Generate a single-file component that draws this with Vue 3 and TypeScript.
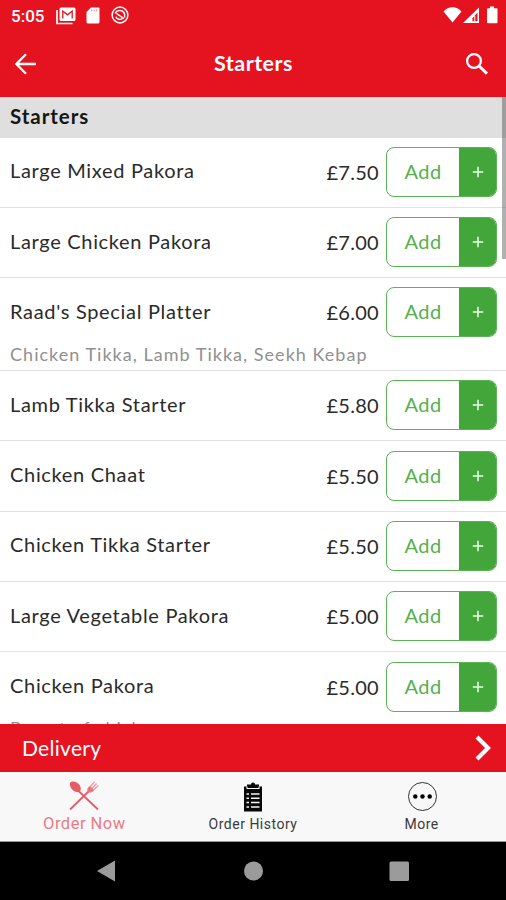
<script setup lang="ts">
interface MenuItem {
  name: string
  price: string
  note?: string
}

const items: MenuItem[] = [
  { name: 'Large Mixed Pakora', price: '£7.50' },
  { name: 'Large Chicken Pakora', price: '£7.00' },
  { name: "Raad's Special Platter", price: '£6.00', note: 'Chicken Tikka, Lamb Tikka, Seekh Kebap' },
  { name: 'Lamb Tikka Starter', price: '£5.80' },
  { name: 'Chicken Chaat', price: '£5.50' },
  { name: 'Chicken Tikka Starter', price: '£5.50' },
  { name: 'Large Vegetable Pakora', price: '£5.00' },
  { name: 'Chicken Pakora', price: '£5.00', note: 'Breast of chicken' },
]
</script>

<template>
  <div class="screen">
    <header class="top">
      <div class="status">
        <span class="clock">5:05</span>
        <svg class="i-mail" width="20" height="18" viewBox="0 0 20 18">
          <path d="M1 3v13.500h15.500" fill="none" stroke="#fff" stroke-width="1.700" />
          <rect x="3.500" y=".5" width="16" height="13.500" rx="1.500" fill="#fff" />
          <path d="M6.800 11.500V4l4.700 3.800 4.700-3.800v7.500" fill="none" stroke="#e5121f" stroke-width="1.300" />
        </svg>
        <svg class="i-card" width="14" height="17" viewBox="0 0 14 17">
          <path d="M5 .5h7.500a1 1 0 0 1 1 1v13.500a1.500 1.500 0 0 1-1.500 1.500H2a1.500 1.500 0 0 1-1.500-1.500V5z" fill="#fff" />
          <path d="M5.800 2.500v1.800M8.200 2.500v1.800M10.600 2.500v1.800" stroke="#f08088" stroke-width="1" />
        </svg>
        <svg class="i-round" width="18" height="18" viewBox="0 0 18 18" fill="none" stroke="#fff">
          <circle cx="9" cy="9" r="7.900" stroke-width="1.500" />
          <path d="M4.200 7.500C6 3.500 12 3.500 13.600 8v3.500M5.500 7.500l7.500 5.200M4.800 10.800c1.200 2.700 4.500 3.400 6.700 1.700" stroke-width="1.500" />
        </svg>
        <svg class="i-signal" width="56" height="18" viewBox="0 0 56 18">
          <path d="M.5 5.500C5-.2 14-.2 18.500 5.500L9.500 16.500z" fill="#fff" />
          <path d="M36 1.500v15.500H20z" fill="#fff" />
          <path d="M34.500 6.500v8.700h-5v-3z" fill="#e5121f" />
          <path d="M31.800 10v5" stroke="#fff" stroke-width="1" fill="none" />
          <path d="M47 .5h4v1.700h2.500a1 1 0 0 1 1 1v13a1 1 0 0 1-1 1h-8.500a1 1 0 0 1-1-1v-13a1 1 0 0 1 1-1h2z" fill="#fff" />
        </svg>
      </div>
      <div class="bar">
        <svg width="24" height="24" viewBox="0 0 24 24" fill="none" stroke="#fff" stroke-width="2.300">
          <path d="M23 12H3.500M13 2.300L3.300 12l9.700 9.700" />
        </svg>
        <h1 class="title">Starters</h1>
        <svg width="24" height="24" viewBox="0 0 24 24" fill="none" stroke="#fff">
          <circle cx="9" cy="9" r="6.900" stroke-width="2.300" />
          <path d="M14 14l8 7.700" stroke-width="3" />
        </svg>
      </div>
    </header>

    <main class="list">
      <h2 class="section">Starters</h2>
      <div v-for="item in items" :key="item.name" class="item" :class="{ tall: item.note }">
        <div class="line">
          <span class="name">{{ item.name }}</span>
          <span class="price">{{ item.price }}</span>
          <button class="add"><span class="label">Add</span><span class="plus"><svg width="12" height="12" viewBox="0 0 12 12"><path d="M6 .8v10.400M.8 6h10.400" stroke="#e8ffe8" stroke-width="1.500" /></svg></span></button>
        </div>
        <p v-if="item.note" class="note">{{ item.note }}</p>
      </div>
      <div class="scroll"></div>
    </main>

    <div class="delivery">
      <span>Delivery</span>
      <svg width="18" height="26" viewBox="0 0 18 26" fill="none" stroke="#fff" stroke-width="4.200">
        <path d="M3 2L14 13 3 24" />
      </svg>
    </div>

    <nav class="tabs">
      <div class="tab active">
        <svg width="30" height="30" viewBox="0 0 30 30">
          <path d="M9 9.500L29 28.500M1 28.500L20.500 9.500" stroke="#e75b66" stroke-width="1.800" fill="none" />
          <path d="M1 2C3-.5 8 .5 10.500 4c2 3 1.500 6-.5 7-3 .8-6.500-1.500-8-4C1 5 .5 3 1 2z" fill="#e75b66" />
          <path d="M20.500 6.500L25.500 1M22.500 8L27.500 2.500M24 9.500L29.300 4.500" stroke="#f0a0a6" stroke-width="1.400" fill="none" />
          <path d="M18.500 11c-1-3 .5-5 2.500-6l4 4c-1 2-3 3.500-6.500 2z" fill="#ea7780" />
        </svg>
        <span>Order Now</span>
      </div>
      <div class="tab">
        <svg width="30" height="30" viewBox="0 0 30 30">
          <path d="M6 5.500h3V3.500h4a2 2 0 0 1 4 0h4v2h3v25H6z" fill="#080808" />
          <path d="M9 5.500v2h12v-2" stroke="#f8f8f8" stroke-width="1.100" fill="none" />
          <path d="M8.500 13H11M8.500 17.300H11M8.500 21.600H11M8.500 26H11M13 13h8.500M13 17.300h8.500M13 21.600h8.500M13 26h8.500" stroke="#f8f8f8" stroke-width="1.500" />
        </svg>
        <span>Order History</span>
      </div>
      <div class="tab">
        <svg width="30" height="30" viewBox="0 0 30 30">
          <circle cx="15.500" cy="15.500" r="14" fill="none" stroke="#333" stroke-width="1" />
          <circle cx="8.300" cy="15.500" r="2.200" /><circle cx="15.500" cy="15.500" r="2.200" /><circle cx="22.700" cy="15.500" r="2.200" />
        </svg>
        <span>More</span>
      </div>
    </nav>

    <footer class="system">
      <svg width="506" height="58" viewBox="0 0 506 58" fill="#9b9b9b">
        <path d="M97 29l18-10.500v21z" />
        <circle cx="253.500" cy="29" r="9.500" />
        <rect x="389.500" y="19.500" width="19.500" height="19.500" rx="1.500" />
      </svg>
    </footer>
  </div>
</template>

<style>
body { margin: 0; }
</style>

<style scoped>
.screen {
  width: 506px;
  height: 900px;
  display: flex;
  flex-direction: column;
  overflow: hidden;
  background: #fff;
  font-family: Lato, "Open Sans", sans-serif;
  color: #2a2a2a;
}
svg { display: block; flex: none; }
.top { height: 97px; flex: none; background: #e5121f; }
.status {
  height: 32px;
  box-sizing: border-box;
  padding: 7px 7px 0 11px;
  display: flex;
  align-items: flex-start;
  color: #fff;
}
.clock { width: 45px; font: 500 17px/19px Roboto, sans-serif; }
.i-mail { margin-right: 10px; }
.i-card { margin-right: 11px; }
.i-round { margin-top: -1px; }
.i-signal { margin-left: auto; margin-top: -1px; }
.bar {
  height: 63px;
  padding: 0 17px 0 13px;
  display: flex;
  align-items: center;
  justify-content: space-between;
}
.title { margin: 0 0 2px 5px; font-size: 21.500px; font-weight: 700; line-height: 26px; letter-spacing: .5px; color: #fff; }
.list { flex: 1; min-height: 0; overflow: hidden; position: relative; }
.section {
  margin: 0;
  height: 40.600px;
  box-sizing: border-box;
  padding-left: 10px;
  background: #dfdfdf;
  font-size: 20.500px;
  line-height: 39px;
  font-weight: 700;
  letter-spacing: .950px;
  color: #151515;
}
.item { height: 70.300px; box-sizing: border-box; border-bottom: 1.500px solid #e2e2e2; }
.item.tall { height: 92.900px; }
.line { height: 68.600px; display: flex; align-items: center; padding: 0 9px 0 10px; }
.name { flex: 1; font-size: 20px; line-height: 24px; letter-spacing: .680px; padding-bottom: 3px; }
.price { font-size: 20px; line-height: 24px; letter-spacing: .3px; margin-right: 7px; }
.add {
  width: 111px;
  height: 50px;
  box-sizing: border-box;
  padding: 0;
  display: flex;
  overflow: hidden;
  border: 1.500px solid #5cb355;
  border-radius: 8px;
  background: #fff;
  font-family: inherit;
}
.label { flex: 1; font-size: 20px; line-height: 47px; letter-spacing: .5px; color: #55b04d; text-align: center; }
.plus { width: 37px; height: 48px; display: flex; align-items: center; justify-content: center; background: #43a63b; }
.note { margin: -4px 0 0 10px; font-size: 18px; line-height: 22px; letter-spacing: 1.030px; color: #909090; }
.scroll { position: absolute; right: 0; top: 0; width: 4px; height: 162px; background: rgba(80, 80, 80, .45); }
.delivery {
  height: 48px;
  flex: none;
  box-sizing: border-box;
  padding: 0 14px 0 22px;
  display: flex;
  align-items: center;
  justify-content: space-between;
  background: #e5121f;
  color: #fff;
  font-size: 21px;
  letter-spacing: .3px;
}
.delivery span { padding-bottom: 2px; }
.tabs { height: 70px; flex: none; display: flex; background: #f8f8f8; border-bottom: 1px solid #999; box-sizing: border-box; }
.tab {
  flex: 1;
  display: flex;
  flex-direction: column;
  align-items: center;
  padding-top: 9px;
  font: 400 14px/18px Roboto, sans-serif;
  letter-spacing: .5px;
  color: #3a3a3a;
}
.tab svg { margin-bottom: 4px; overflow: visible; }
.active { color: #ec7a84; font-size: 16.500px; }
.system { height: 58px; flex: none; background: #000; }
</style>
